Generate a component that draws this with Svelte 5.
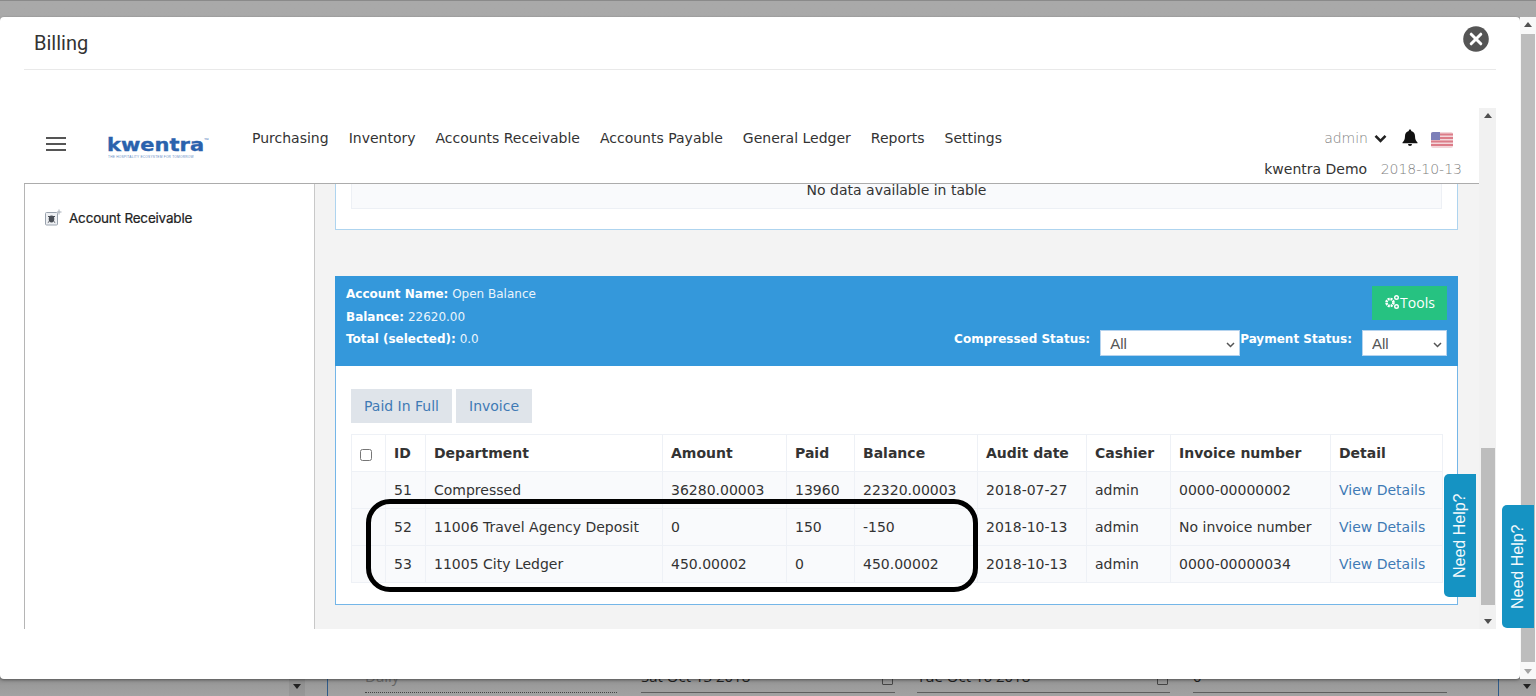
<script>
	const nav = ["Purchasing", "Inventory", "Accounts Receivable", "Accounts Payable", "General Ledger", "Reports", "Settings"];
	const cols = [34, 40, 237, 124, 68, 123, 109, 84, 160, 112];
	const heads = ["ID", "Department", "Amount", "Paid", "Balance", "Audit date", "Cashier", "Invoice number", "Detail"];
	const rows = [
		["51", "Compressed", "36280.00003", "13960", "22320.00003", "2018-07-27", "admin", "0000-00000002"],
		["52", "11006 Travel Agency Deposit", "0", "150", "-150", "2018-10-13", "admin", "No invoice number"],
		["53", "11005 City Ledger", "450.00002", "0", "450.00002", "2018-10-13", "admin", "0000-00000034"]
	];
</script>

<div class="page">
	<div class="backdrop-bottom">
		<span class="bd-band"></span>
		<span class="bd-arrow"></span>
		<span class="bd-rule"></span>
		<div class="bd-field dotted"><span>Daily</span></div>
		<div class="bd-field date1"><span>Sat Oct 13 2018</span><i></i></div>
		<div class="bd-field date2"><span>Tue Oct 16 2018</span><i></i></div>
		<div class="bd-field zero"><span>0</span></div>
		<span class="bd-rule right"></span>
		<span class="bd-arrow last"></span>
	</div>

	<div class="modal">
		<div class="modal-head">
			<h1>Billing</h1>
			<svg class="close" width="28" height="28" viewBox="0 0 28 28">
				<circle cx="14" cy="14" r="12.8" fill="#555" />
				<path d="M9.2 9.2l9.6 9.6M18.8 9.2l-9.6 9.6" stroke="#fff" stroke-width="3" stroke-linecap="round" />
			</svg>
		</div>

		<div class="frame">
			<div class="frame-content">
				<header>
					<div class="burger"><span></span><span></span><span></span></div>
					<div class="logo">
						<div class="logo-name">kwentra<sup>TM</sup></div>
						<div class="logo-tag">THE HOSPITALITY ECOSYSTEM FOR TOMORROW</div>
					</div>
					<nav>
						{#each nav as item}
							<span>{item}</span>
						{/each}
					</nav>
					<div class="user">
						<div class="user-top">
							<span class="admin">admin</span>
							<svg width="13" height="9" viewBox="0 0 13 9"><path d="M1.5 1.8l5 5 5-5" fill="none" stroke="#222" stroke-width="2.6" /></svg>
							<svg class="bell" width="16" height="17" viewBox="0 0 16 17">
								<path d="M8 0.5a1.2 1.2 0 0 1 1.2 1.4C11.6 2.4 13 4.4 13 7c0 3.5 1 5 2.5 6.4v.8H.5v-.8C2 12 3 10.500 3 7c0-2.600 1.400-4.600 3.800-5.100A1.200 1.200 0 0 1 8 .5zM6 15h4a2 2 0 0 1-4 0z" fill="#111" />
							</svg>
							<svg class="flag" width="22" height="16" viewBox="0 0 22 16">
								<rect width="22" height="16" rx="2" fill="#f3d6da" />
								<path d="M0 2.500h22M0 6h22M0 9.500h22M0 13h22" stroke="#dc7c88" stroke-width="1.800" />
								<path d="M2 0h7v8H0V2a2 2 0 0 1 2-2z" fill="#7d7fb8" />
							</svg>
						</div>
						<div class="user-bottom">
							<span class="company">kwentra Demo</span>
							<span class="date">2018-10-13</span>
						</div>
					</div>
				</header>

				<div class="body">
					<aside>
						<div class="side-item">
							<svg width="17" height="17" viewBox="0 0 17 17">
								<rect x="0.500" y="3.500" width="12" height="12.500" rx="1" fill="#eef0f3" stroke="#9aa3ae" />
								<ellipse cx="6.500" cy="10" rx="2.800" ry="3.400" fill="#4a4f57" />
								<path d="M3 7.500l7 0M2.800 13.500l1.500-1M10.200 13.500l-1.500-1" stroke="#4a4f57" stroke-width="1" />
								<path d="M14 0.500v5M12 3h4.500" stroke="#a4acb6" stroke-width="1" />
							</svg>
							<span>Account Receivable</span>
						</div>
					</aside>

					<main>
						<section class="panel-top">
							<div class="empty">No data available in table</div>
						</section>

						<section class="panel">
							<div class="panel-head">
								<div class="summary">
									<div><b>Account Name:</b> Open Balance</div>
									<div><b>Balance:</b> 22620.00</div>
									<div><b>Total (selected):</b> 0.0</div>
								</div>
								<div class="controls">
									<button class="tools">
										<svg width="16" height="16" viewBox="0 0 16 16">
											<circle cx="6" cy="8.500" r="3.500" fill="none" stroke="#fff" stroke-width="2.600" stroke-dasharray="2 0.750" />
											<circle cx="12.500" cy="3.500" r="1.800" fill="none" stroke="#fff" stroke-width="1.400" />
											<circle cx="12.500" cy="12.500" r="1.800" fill="none" stroke="#fff" stroke-width="1.400" />
										</svg>Tools
									</button>
									<div class="filters">
										<label for="compressed">Compressed Status:</label>
										<span class="select wide">
											<select id="compressed"><option>All</option></select>
											<svg width="9" height="6" viewBox="0 0 9 6"><path d="M1 1l3.500 3.500L8 1" fill="none" stroke="#555" stroke-width="1.500" /></svg>
										</span>
										<label for="payment">Payment Status:</label>
										<span class="select narrow">
											<select id="payment"><option>All</option></select>
											<svg width="9" height="6" viewBox="0 0 9 6"><path d="M1 1l3.500 3.500L8 1" fill="none" stroke="#555" stroke-width="1.500" /></svg>
										</span>
									</div>
								</div>
							</div>

							<div class="panel-body">
								<div class="actions">
									<button>Paid In Full</button>
									<button>Invoice</button>
								</div>
								<table>
									<colgroup>
										{#each cols as w}
											<col style="width: {w}px" />
										{/each}
									</colgroup>
									<thead>
										<tr>
											<th><input type="checkbox" /></th>
											{#each heads as h}
												<th>{h}</th>
											{/each}
										</tr>
									</thead>
									<tbody>
										{#each rows as row}
											<tr>
												<td></td>
												{#each row as cell}
													<td>{cell}</td>
												{/each}
												<td><a href="#details">View Details</a></td>
											</tr>
										{/each}
									</tbody>
								</table>
							</div>
						</section>
					</main>
				</div>
			</div>

			<div class="scrollbar inner">
				<span class="up"></span>
				<div class="track"><div class="thumb"></div></div>
				<span class="down"></span>
			</div>
		</div>
	</div>

	<div class="scrollbar outer">
		<span class="up"></span>
		<div class="track"><div class="thumb"></div></div>
		<span class="down"></span>
	</div>

	<div class="help first">Need Help?</div>
	<div class="help second">Need Help?</div>
	<div class="circled"></div>
</div>

<style>
	:global(body) {
		margin: 0;
		overflow: hidden;
	}
	.page {
		position: relative;
		width: 1536px;
		height: 696px;
		overflow: hidden;
		background: linear-gradient(#a9a9a9, #a4a4a4);
		border-top: 1px solid #8a8a8a;
		box-sizing: border-box;
		font-family: "DejaVu Sans", sans-serif;
		font-size: 14px;
		color: #333;
	}

	/* what shows under the modal */
	.backdrop-bottom {
		position: absolute;
		left: 0;
		right: 0;
		bottom: 0;
		height: 26px;
		background: linear-gradient(#7c7c7c, #9b9b9b 60%, #a2a2a2);
		font-family: "Open Sans", sans-serif;
		font-size: 15px;
		color: #1f1f1f;
	}
	.bd-band {
		position: absolute;
		left: 289px;
		top: 0;
		bottom: 0;
		width: 16px;
		background: rgba(0, 0, 0, 0.06);
	}
	.bd-arrow {
		position: absolute;
		left: 293px;
		top: 14px;
		border: 4px solid transparent;
		border-top: 5px solid #222;
		border-bottom: 0;
	}
	.bd-arrow.last {
		left: 1523px;
	}
	.bd-rule {
		position: absolute;
		left: 327px;
		top: 0;
		bottom: 0;
		width: 1px;
		background: #2f5a88;
	}
	.bd-rule.right {
		left: 1498px;
	}
	.bd-field {
		position: absolute;
		top: 0;
		height: 22px;
		border-bottom: 1px solid #5e5e5e;
		line-height: 13px;
	}
	.bd-field i {
		position: absolute;
		right: 2px;
		top: 5px;
		width: 9px;
		height: 8px;
		border: 1px solid #444;
		border-radius: 1px;
	}
	.dotted {
		left: 365px;
		width: 252px;
		border-bottom: 1px dotted #444;
		color: #666;
	}
	.date1 {
		left: 641px;
		width: 254px;
	}
	.date2 {
		left: 917px;
		width: 253px;
	}
	.zero {
		left: 1193px;
		width: 254px;
	}

	.modal {
		position: absolute;
		left: 0;
		top: 16px;
		width: 1520px;
		height: 662px;
		background: #fff;
		border-radius: 4px;
		box-shadow: 0 1px 3px rgba(0, 0, 0, 0.4);
		padding: 0 24px;
		box-sizing: border-box;
	}
	.modal-head {
		display: flex;
		align-items: center;
		justify-content: space-between;
		height: 52px;
		border-bottom: 1px solid #e9e9e9;
		padding: 0 6px 0 10px;
	}
	h1 {
		margin: 0;
		font-family: "Roboto", sans-serif;
		font-size: 20px;
		font-weight: 400;
		color: #333;
		padding-bottom: 1px;
	}
	.close {
		margin-top: -8px;
	}

	.frame {
		display: flex;
		height: 521px;
		margin-top: 38px;
	}
	.frame-content {
		display: flex;
		flex-direction: column;
		flex: 1;
		min-width: 0;
	}

	header {
		display: flex;
		height: 76px;
		box-sizing: border-box;
		border-bottom: 1px solid #acacac;
		background: #fff;
		position: relative;
	}
	.burger {
		display: flex;
		flex-direction: column;
		gap: 4px;
		width: 20px;
		margin: 29px 0 0 22px;
	}
	.burger span {
		height: 2px;
		background: #555;
	}
	.logo {
		margin: 25px 0 0 41px;
		width: 102px;
		color: #2a62ad;
	}
	.logo-name {
		font-family: "DejaVu Sans", sans-serif;
		font-weight: 700;
		font-size: 21px;
		line-height: 17px;
		transform: scaleY(0.8);
		transform-origin: top left;
		-webkit-text-stroke: 0.4px #2a62ad;
	}
	.logo-name sup {
		font-size: 3px;
		font-weight: 400;
		vertical-align: 13px;
		-webkit-text-stroke: 0;
	}
	.logo-tag {
		font-family: "Liberation Sans", sans-serif;
		font-size: 3.200px;
		line-height: 4px;
		letter-spacing: 0.240px;
		white-space: nowrap;
		margin-top: -2px;
		margin-left: 1px;
		opacity: 0.75;
	}
	nav {
		display: flex;
		gap: 20px;
		margin: 21px 0 0 43px;
		height: 18px;
		line-height: 18px;
		white-space: nowrap;
	}
	.user {
		margin-left: auto;
		padding-right: 17px;
		display: flex;
		flex-direction: column;
		align-items: flex-end;
	}
	.user-top {
		display: flex;
		align-items: center;
		margin: 21px 9px 0 0;
		height: 18px;
	}
	.admin {
		color: #7f7f7f;
		font-weight: 200;
		margin-right: 6px;
	}
	.bell {
		margin-left: 15px;
		margin-top: -1px;
	}
	.flag {
		margin-left: 13px;
		margin-top: 3px;
	}
	.user-bottom {
		margin-top: 13px;
		line-height: 18px;
		white-space: nowrap;
	}
	.date {
		margin-left: 9px;
		color: #7f7f7f;
		font-weight: 200;
	}

	.body {
		display: flex;
		flex: 1;
		min-height: 0;
	}
	aside {
		width: 291px;
		flex: none;
		box-sizing: border-box;
		border-left: 1px solid #b5b5b5;
		border-right: 1px solid #c8c8c8;
		background: #fff;
		padding: 25px 0 0 20px;
	}
	.side-item {
		display: flex;
		align-items: center;
		gap: 7px;
		font-family: "Inter", sans-serif;
		font-size: 13.500px;
		letter-spacing: -0.200px;
		color: #222;
		-webkit-text-stroke: 0.2px #222;
	}
	main {
		flex: 1;
		min-width: 0;
		background: #f3f3f3;
		padding: 0 21px 0 20px;
	}

	.panel-top {
		height: 46px;
		box-sizing: border-box;
		background: #fff;
		border: 1px solid #aed4ef;
		border-top: 0;
		padding: 0 15px;
	}
	.empty {
		height: 25px;
		box-sizing: border-box;
		border: 1px solid #edf0f5;
		border-top: 0;
		background: #f9fafc;
		text-align: center;
		line-height: 13px;
	}

	.panel {
		margin-top: 46px;
		background: #fff;
		border: 1px solid #74b6e8;
		border-top: 0;
		height: 329px;
		box-sizing: border-box;
	}
	.panel-head {
		display: flex;
		justify-content: space-between;
		height: 90px;
		box-sizing: border-box;
		background: #3498db;
		margin: 0 -1px;
		padding: 7px 11px 0;
		color: #fff;
		font-size: 12px;
	}
	.summary {
		line-height: 22.500px;
		color: #eaf4fb;
	}
	.summary b {
		color: #fff;
	}
	.controls {
		display: flex;
		flex-direction: column;
		align-items: flex-end;
	}
	.tools {
		display: flex;
		align-items: center;
		justify-content: center;
		width: 75px;
		height: 34px;
		margin-top: 3px;
		border: 0;
		background: #26c281;
		color: #fff;
		font-family: "Open Sans", sans-serif;
		font-size: 14px;
		padding: 0 0 2px;
	}
	.filters {
		display: flex;
		align-items: center;
		margin-top: 10px;
		height: 26px;
	}
	.filters label {
		font-weight: 700;
		margin-top: -9px;
		margin-right: 10px;
	}
	.select {
		position: relative;
		display: block;
		height: 26px;
	}
	.select svg {
		position: absolute;
		right: 5px;
		top: 12px;
		pointer-events: none;
	}
	select {
		appearance: none;
		display: block;
		width: 100%;
		height: 26px;
		border: 1px solid #b5d3ee;
		background: #fff;
		color: #555;
		font-family: "Liberation Sans", sans-serif;
		font-size: 15px;
		padding: 0 0 0 9px;
		border-radius: 0;
		box-sizing: border-box;
	}
	.wide {
		width: 140px;
	}
	.narrow {
		width: 85px;
	}

	.panel-body {
		padding: 23px 15px 0;
	}
	.actions {
		display: flex;
		gap: 4px;
		height: 34px;
	}
	.actions button {
		border: 0;
		padding: 0 13px;
		background: #dfe4ea;
		color: #3f7ab5;
		font: inherit;
	}
	table {
		margin-top: 11px;
		border-collapse: collapse;
		table-layout: fixed;
		width: 1091px;
		background: #f9fafc;
	}
	th,
	td {
		height: 37px;
		box-sizing: border-box;
		border: 1px solid #eef1f6;
		padding: 0 8px;
		text-align: left;
		white-space: nowrap;
	}
	th {
		font-weight: 700;
		color: #333;
		background: #fff;
	}
	th input {
		width: 12px;
		height: 12px;
		margin: 4px 0 0 0;
		display: block;
	}
	a {
		color: #3f7ab5;
		text-decoration: none;
	}

	.scrollbar {
		display: flex;
		flex-direction: column;
		align-items: center;
		flex: none;
		background: #f1f1f1;
		box-sizing: border-box;
	}
	.scrollbar .up,
	.scrollbar .down {
		flex: none;
		width: 0;
		height: 0;
		border: 4px solid transparent;
	}
	.scrollbar .up {
		border-bottom: 5px solid #505050;
		border-top: 0;
		margin: 5px 0 7px;
	}
	.scrollbar .down {
		border-top: 5px solid #505050;
		border-bottom: 0;
		margin: 7px 0 5px;
	}
	.scrollbar .track {
		flex: 1;
		width: 100%;
		display: flex;
		flex-direction: column;
		align-items: center;
	}
	.scrollbar .thumb {
		width: 14px;
		background: #bdbdbd;
	}
	.inner {
		width: 17px;
	}
	.inner .track {
		justify-content: flex-end;
	}
	.inner .thumb {
		height: 157px;
		margin-bottom: 7px;
	}
	.outer {
		position: absolute;
		left: 1520px;
		top: 16px;
		width: 16px;
		height: 662px;
		background: #f8f8f8;
	}
	.outer .thumb {
		height: 100%;
		width: 14px;
	}
	.outer .down {
		border-top-color: #a3a3a3;
	}

	.help {
		position: absolute;
		width: 32px;
		height: 123px;
		background: #1593c3;
		color: #f2f9fc;
		border-radius: 0 5px 5px 0;
		transform: rotate(180deg);
		writing-mode: vertical-rl;
		text-align: center;
		line-height: 32px;
		font-family: "Liberation Sans", sans-serif;
		font-size: 16px;
	}
	.first {
		left: 1444px;
		top: 473px;
	}
	.second {
		left: 1502px;
		top: 504px;
	}

	.circled {
		position: absolute;
		left: 366px;
		top: 498px;
		width: 612px;
		height: 93px;
		box-sizing: border-box;
		border: 5px solid #000;
		border-radius: 24px;
	}
</style>
